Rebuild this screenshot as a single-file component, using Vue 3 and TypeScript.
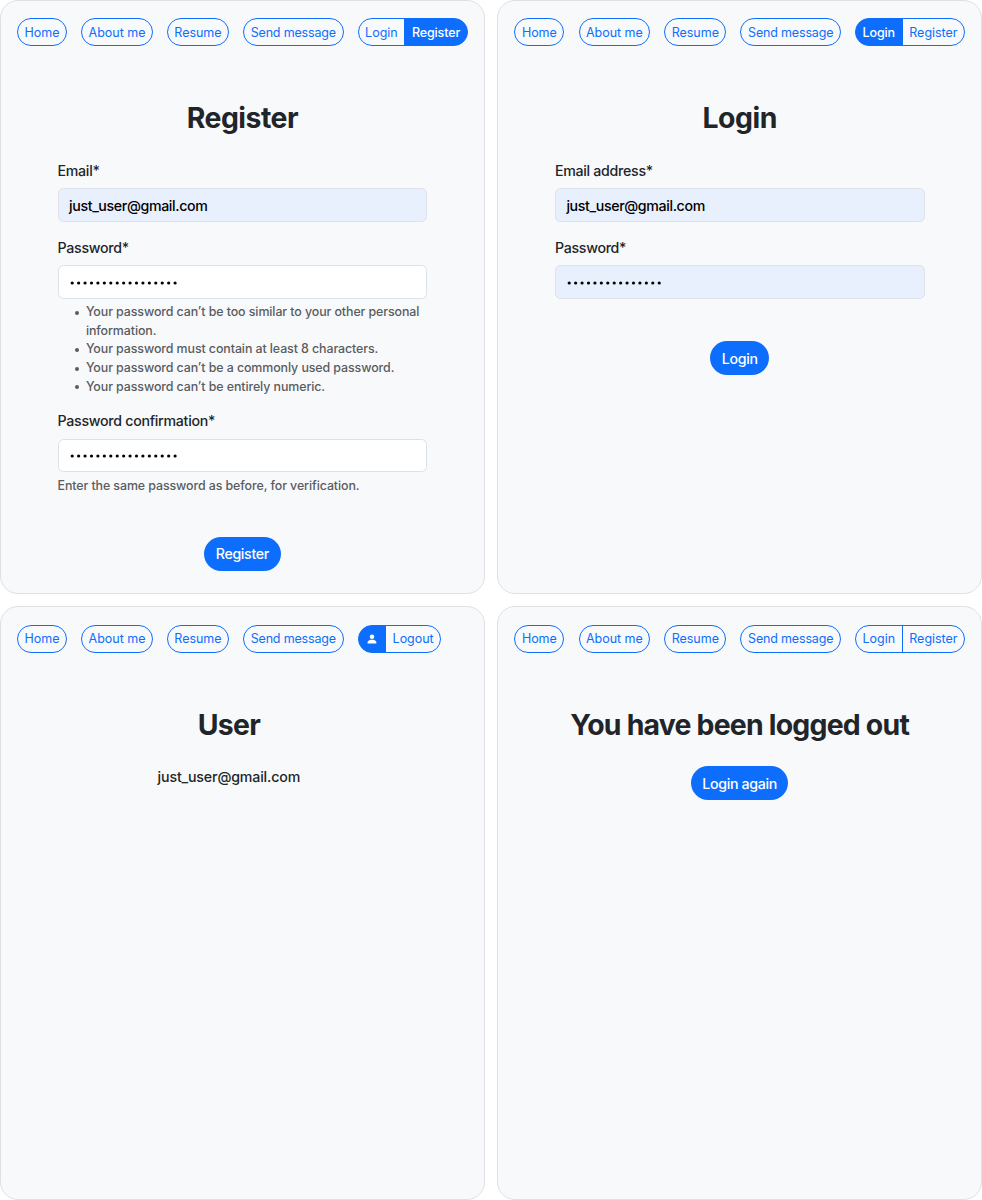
<script setup lang="ts">
interface Field {
  label: string
  value?: string
  dots?: number
  filled: boolean
  rules?: string[]
  note?: string
}
interface Screen {
  id: string
  title: string
  active: 'login' | 'register' | 'user' | ''
  fields?: Field[]
  email?: string
  action?: string
}

const links = [
  { text: 'Home', cls: 'home' },
  { text: 'About me', cls: 'about' },
  { text: 'Resume', cls: 'resume' },
  { text: 'Send message', cls: 'send' },
]

const screens: Screen[] = [
  {
    id: 'register',
    title: 'Register',
    active: 'register',
    action: 'Register',
    fields: [
      { label: 'Email*', value: 'just_user@gmail.com', filled: true },
      {
        label: 'Password*',
        dots: 17,
        filled: false,
        rules: [
          'Your password can’t be too similar to your other personal information.',
          'Your password must contain at least 8 characters.',
          'Your password can’t be a commonly used password.',
          'Your password can’t be entirely numeric.',
        ],
      },
      {
        label: 'Password confirmation*',
        dots: 17,
        filled: false,
        note: 'Enter the same password as before, for verification.',
      },
    ],
  },
  {
    id: 'login',
    title: 'Login',
    active: 'login',
    action: 'Login',
    fields: [
      { label: 'Email address*', value: 'just_user@gmail.com', filled: true },
      { label: 'Password*', dots: 15, filled: true },
    ],
  },
  { id: 'user', title: 'User', active: 'user', email: 'just_user@gmail.com' },
  { id: 'logout', title: 'You have been logged out', active: '', action: 'Login again' },
]
</script>

<template>
  <main class="board">
    <section v-for="s in screens" :key="s.id" class="panel" :class="s.id">
      <nav class="nav">
        <a v-for="l in links" :key="l.text" class="pill" :class="l.cls">{{ l.text }}</a>
        <div v-if="s.active === 'user'" class="group">
          <a class="seg person on">
            <svg width="12" height="12" viewBox="0 0 16 16" fill="currentColor">
              <path d="M3 14s-1 0-1-1 1-4 6-4 6 3 6 4-1 1-1 1zm5-6a3 3 0 1 0 0-6 3 3 0 0 0 0 6" />
            </svg>
          </a>
          <a class="seg out">Logout</a>
        </div>
        <div v-else class="group">
          <a class="seg in" :class="{ on: s.active === 'login' }">Login</a>
          <a class="seg reg" :class="{ on: s.active === 'register' }">Register</a>
        </div>
      </nav>

      <h1 class="title">{{ s.title }}</h1>

      <form v-if="s.fields" class="form" @submit.prevent>
        <div v-for="f in s.fields" :key="f.label" class="field">
          <label class="label">{{ f.label }}</label>
          <div class="control" :class="{ filled: f.filled }">
            <span v-if="f.value">{{ f.value }}</span>
            <svg v-else class="mask" width="120" height="6" viewBox="0 0 120 6">
              <circle v-for="n in f.dots" :key="n" :cx="3.2 + (n - 1) * 6.43" cy="3" r="1.6" />
            </svg>
          </div>
          <ul v-if="f.rules" class="help rules">
            <li v-for="r in f.rules" :key="r">{{ r }}</li>
          </ul>
          <div v-if="f.note" class="help note">{{ f.note }}</div>
        </div>
      </form>

      <p v-if="s.email" class="email">{{ s.email }}</p>
      <div v-if="s.action" class="actions">
        <button type="button" class="btn">{{ s.action }}</button>
      </div>
    </section>
  </main>
</template>

<style>
body {
  margin: 0;
  background: #fff;
}
</style>

<style scoped>
.board {
  box-sizing: border-box;
  width: 982px;
  height: 1200px;
  display: grid;
  grid-template-columns: 484.7px 484.6px;
  grid-template-rows: 594px 594px;
  column-gap: 12.7px;
  row-gap: 12px;
  font-family: Inter, "Liberation Sans", sans-serif;
  font-size: 14.2px;
  font-weight: 500;
  letter-spacing: -0.28px;
  color: #212529;
}
.panel {
  box-sizing: border-box;
  border: 1px solid #dee0e3;
  border-radius: 18px;
  background: #f8f9fb;
  padding-top: 17px;
}
.user,
.logout {
  padding-top: 17.5px;
}
.nav {
  display: flex;
  gap: 14.1px;
  padding-left: 15.9px;
  height: 28px;
}
.pill,
.seg {
  box-sizing: border-box;
  height: 28px;
  display: flex;
  align-items: center;
  justify-content: center;
  padding-top: 1px;
  border: 1px solid #0d6efd;
  color: #0d6efd;
  font-size: 12.5px;
  font-weight: 400;
  line-height: 18px;
  letter-spacing: -0.02px;
  white-space: nowrap;
}
.pill {
  border-radius: 14px;
}
.home { width: 50.2px; }
.about { width: 71.7px; }
.resume { width: 62px; }
.send { width: 100.5px; letter-spacing: -0.17px; }
.group {
  display: flex;
}
.seg:first-child {
  border-radius: 14px 0 0 14px;
}
.seg:last-child {
  border-radius: 0 14px 14px 0;
  margin-left: -1px;
}
.in { width: 47.5px; }
.reg { width: 63.8px; }
.person { width: 28.5px; }
.person svg { margin-top: -1px; }
.out { width: 56px; }
.seg.on {
  background: #0d6efd;
  color: #fff;
  font-weight: 500;
  letter-spacing: -0.12px;
}
.title {
  margin: 55px 0 0;
  height: 34px;
  line-height: 34px;
  text-align: center;
  font-size: 28.4px;
  font-weight: 700;
  letter-spacing: -0.5px;
}
.user .title {
  padding-right: 27px;
  letter-spacing: -0.7px;
}
.logout .title {
  letter-spacing: -0.78px;
}
.form {
  width: 369.8px;
  margin: 25px 0 0 56.5px;
}
.field {
  margin-bottom: 14.5px;
}
.label {
  display: block;
  height: 21px;
  line-height: 21px;
  margin-bottom: 7.4px;
}
.control {
  box-sizing: border-box;
  height: 33.8px;
  display: flex;
  align-items: center;
  padding: 0 10.5px;
  border: 1px solid #dee2e6;
  border-radius: 5.5px;
  background: #fff;
  color: #000;
  letter-spacing: -0.36px;
}
.control.filled {
  background: #e8f0fe;
}
.mask {
  margin-top: 2px;
}
.help {
  color: #595c60;
  font-size: 12.4px;
  line-height: 18.65px;
  letter-spacing: -0.08px;
}
.rules {
  margin: 4.3px 0 -0.8px;
  padding-left: 28.4px;
  list-style: none;
}
.rules li::before {
  content: "";
  float: left;
  width: 4px;
  height: 4px;
  margin: 7.5px 0 0 -11.4px;
  border-radius: 50%;
  background: currentColor;
}
.note {
  margin: 4.7px 0 -0.7px;
}
.actions {
  display: flex;
  justify-content: center;
}
.btn {
  height: 34px;
  padding: 0;
  border: 0;
  border-radius: 17px;
  background: #0d6efd;
  color: #fff;
  font: inherit;
  letter-spacing: -0.33px;
  white-space: nowrap;
}
.register .btn { width: 77px; }
.login .btn { width: 59px; }
.logout .btn { width: 97px; }
.register .actions { margin-top: 41.7px; }
.login .actions { margin-top: 42.5px; }
.logout .actions { margin-top: 24.5px; }
.email {
  margin: 24.4px 0 0;
  padding-right: 27px;
  text-align: center;
  line-height: 21px;
  letter-spacing: -0.15px;
}
</style>
